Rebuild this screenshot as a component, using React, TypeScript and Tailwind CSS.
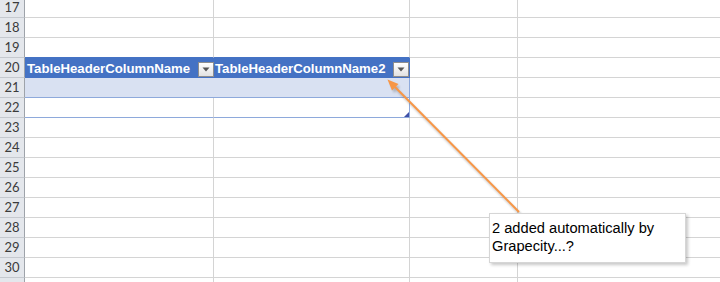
import React from "react";

const GRID = "border-[#d4d4d4]";

function Btn() {
  return (
    <div className="w-[16px] h-[15px] box-border border border-[#8e8e8e] bg-gradient-to-b from-[#ffffff] to-[#e2e2e2] flex items-center justify-center shrink-0">
      <svg width="8" height="5" viewBox="0 0 8 5">
        <polygon points="0.5,0.5 7.5,0.5 4,4.5" fill="#555" />
      </svg>
    </div>
  );
}

function RowHead({ n }: { n: number }) {
  return (
    <div className="w-[25px] h-full box-border border-r border-r-[#9ea3aa] border-b border-b-[#c5c9cf] bg-[#e4e7ec] flex items-end justify-center pb-[3px] text-[13px] leading-[13px] text-[#3b3b3b] font-['Lato',sans-serif]">
      {n <= 30 ? n : ""}
    </div>
  );
}

function Row({ n }: { n: number }) {
  const isHeader = n === 20;
  const isBand = n === 21;
  const isLast = n === 22;
  const isAbove = n === 19;
  let a: React.ReactNode;
  let b: React.ReactNode;
  if (isHeader) {
    a = (
      <div className="w-[189px] h-full box-border border-b border-b-[#4472c4] bg-[#4472c4] flex items-end justify-between pl-[2px] pb-0">
        <span className="text-white font-bold text-[13.2px] leading-[15px] pb-[1px] font-['Liberation_Sans',sans-serif]">TableHeaderColumnName</span>
        <Btn />
      </div>
    );
    b = (
      <div className="w-[196px] h-full box-border border-b border-b-[#4472c4] border-r border-r-[#4472c4] bg-[#4472c4] flex items-end justify-between pl-[1px]">
        <span className="text-white font-bold text-[13.2px] leading-[15px] pb-[1px] font-['Liberation_Sans',sans-serif]">TableHeaderColumnName2</span>
        <Btn />
      </div>
    );
  } else if (isBand) {
    a = <div className="w-[189px] h-full box-border border-b border-b-[#8ea9db] bg-[#d9e1f2]" />;
    b = <div className="w-[196px] h-full box-border border-b border-b-[#8ea9db] border-r border-r-[#8ea9db] bg-[#d9e1f2]" />;
  } else if (isLast) {
    a = <div className={`w-[189px] h-full box-border border-b border-b-[#8ea9db] border-r ${GRID}`} />;
    b = (
      <div className="relative w-[196px] h-full box-border border-b border-b-[#8ea9db] border-r border-r-[#8ea9db]">
        <svg className="absolute right-0 bottom-0" width="5" height="5" viewBox="0 0 5 5">
          <polygon points="5,0 5,5 0,5" fill="#3f51a8" />
        </svg>
      </div>
    );
  } else if (isAbove) {
    a = <div className={`w-[189px] h-full box-border border-b border-b-[#4472c4] border-r ${GRID}`} />;
    b = <div className={`w-[196px] h-full box-border border-b border-b-[#4472c4] border-r ${GRID}`} />;
  } else {
    a = <div className={`w-[189px] h-full box-border border-b border-r ${GRID}`} />;
    b = <div className={`w-[196px] h-full box-border border-b border-r ${GRID}`} />;
  }
  return (
    <div className="flex h-[20px]">
      <RowHead n={n} />
      {a}
      {b}
      <div className={`w-[108px] h-full box-border border-b border-r ${GRID}`} />
      <div className={`flex-1 h-full box-border border-b ${GRID}`} />
    </div>
  );
}

export default function App() {
  const rows = [];
  for (let i = 17; i <= 31; i++) rows.push(i);
  return (
    <div className="relative w-[720px] h-[282px] overflow-hidden bg-white">
      <div className="-mt-[2px]">
        {rows.map((n) => (
          <Row key={n} n={n} />
        ))}
      </div>
      <svg className="absolute left-0 top-0 pointer-events-none" width="720" height="282" viewBox="0 0 720 282">
        <defs>
          <filter id="sh" x="-10%" y="-10%" width="130%" height="130%">
            <feGaussianBlur stdDeviation="1.2" />
          </filter>
        </defs>
        <g filter="url(#sh)" opacity="0.45">
          <line x1="521" y1="215" x2="397" y2="90" stroke="#777" strokeWidth="2" />
          <polygon points="390,83 400,87 394,93" fill="#777" />
        </g>
        <line x1="519" y1="212" x2="395" y2="87" stroke="#f79646" strokeWidth="2" />
        <polygon points="387.5,79.5 398.5,84 392,90.5" fill="#f79646" />
      </svg>
      <div className="absolute left-[489px] top-[213px] w-[197px] h-[50px] box-border border border-[#d6d6d6] bg-white shadow-[2px_2px_3px_rgba(0,0,0,0.22)] pl-[2px] pt-[5px] text-[14.67px] leading-[18px] text-black font-['Liberation_Sans',sans-serif]">
        <div>2 added automatically by</div>
        <div>Grapecity...?</div>
      </div>
    </div>
  );
}
